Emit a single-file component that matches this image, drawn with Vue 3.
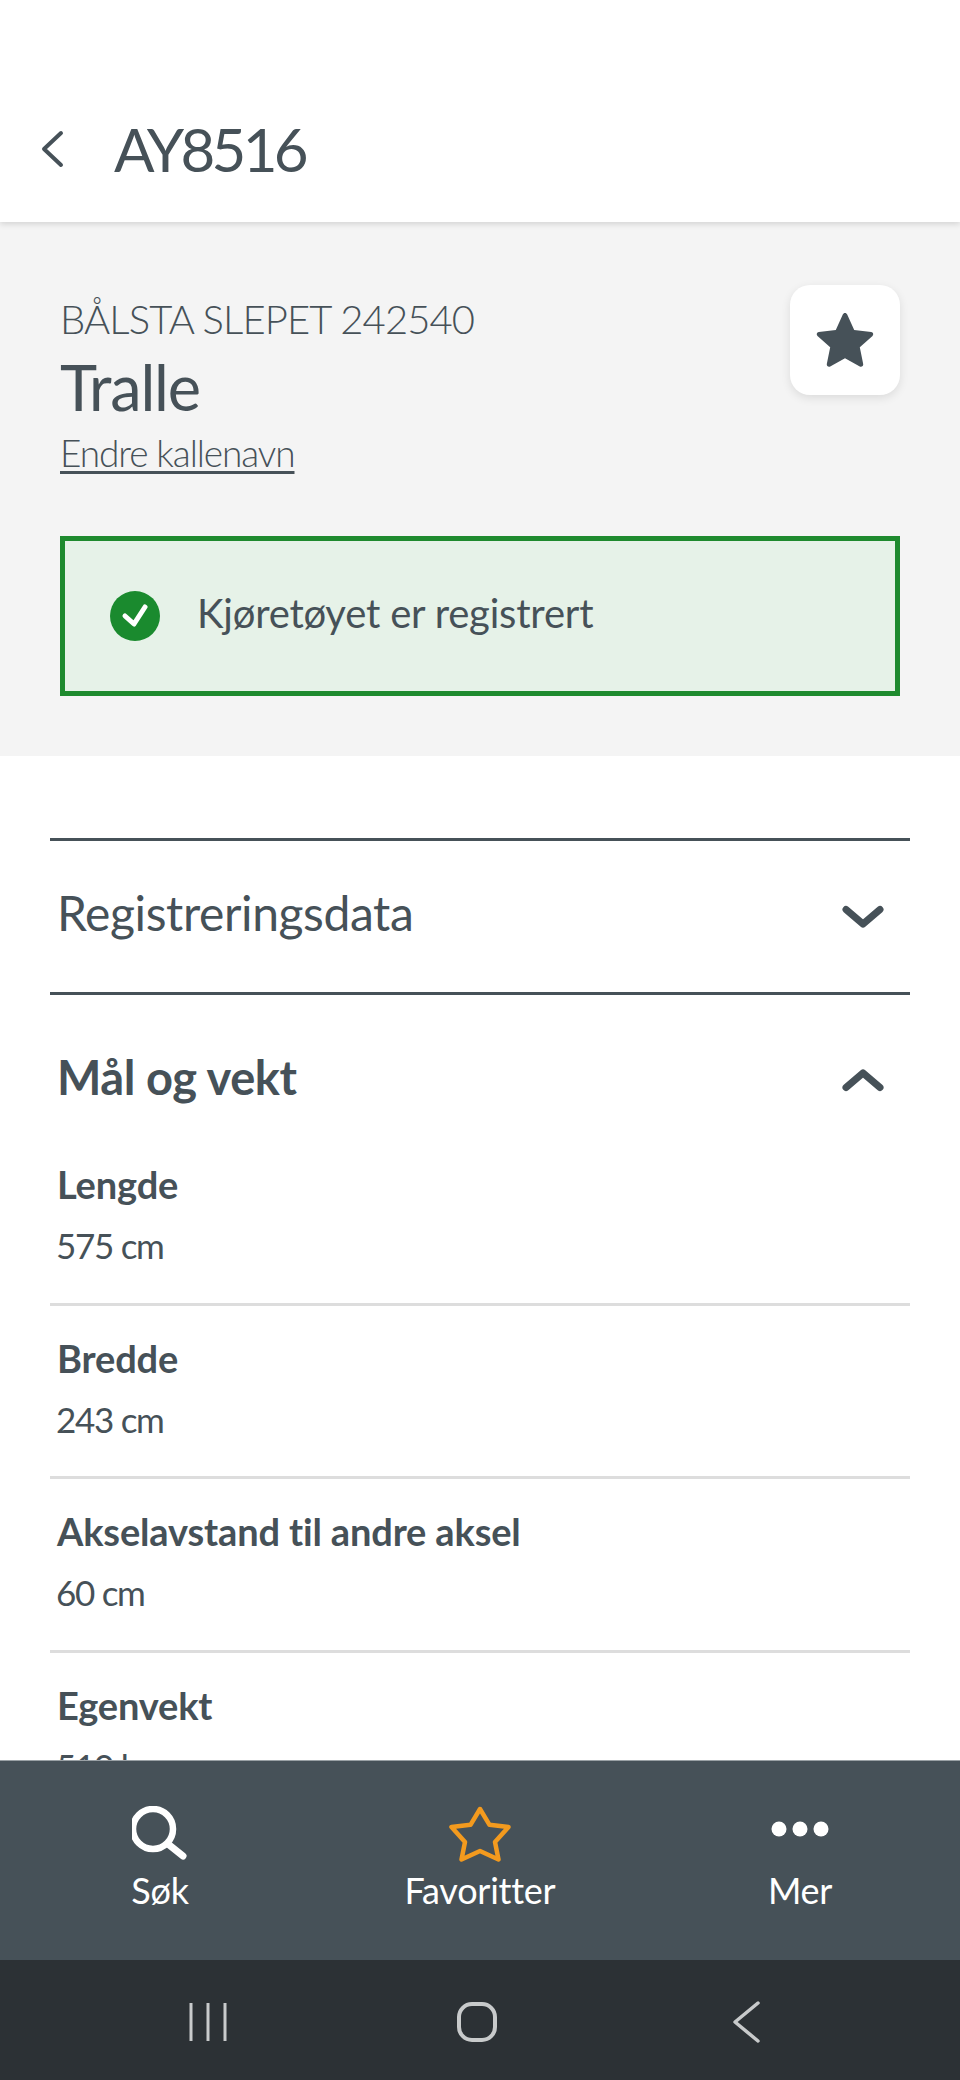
<script setup>
const rows = [
  { label: 'Lengde', value: '575 cm' },
  { label: 'Bredde', value: '243 cm' },
  { label: 'Akselavstand til andre aksel', value: '60 cm' },
  { label: 'Egenvekt', value: '510 kg' },
]
</script>

<template>
  <div class="phone">
    <header class="top">
      <svg class="back" width="24" height="40" viewBox="0 0 24 40"><path d="M21 4 4 20l17 16" fill="none" stroke="#465158" stroke-width="4" stroke-linecap="round" stroke-linejoin="round"/></svg>
      <h1 class="plate">AY8516</h1>
    </header>

    <main class="scroll">
      <section class="summary">
        <div class="head">
          <div class="names">
            <div class="owner">BÅLSTA SLEPET 242540</div>
            <div class="kind">Tralle</div>
            <a class="rename">Endre kallenavn</a>
          </div>
          <button class="fav">
            <svg width="60" height="56" viewBox="0 0 60 56"><path d="M30 1c1 0 1.800.6 2.200 1.500l7 15.500 17 2c2 .3 2.700 2.600 1.300 3.900L44.800 35.300l3.400 16.600c.4 2-1.700 3.400-3.400 2.500L30 46.200l-14.800 8.200c-1.700.9-3.800-.5-3.400-2.500l3.400-16.600L2.500 23.900c-1.400-1.300-.7-3.600 1.300-3.900l17-2 7-15.500C28.200 1.600 29 1 30 1z" fill="#465158"/></svg>
          </button>
        </div>
        <div class="alert">
          <svg width="50" height="50" viewBox="0 0 50 50"><circle cx="25" cy="25" r="25" fill="#1a8a2e"/><path d="m15 25 9 8 11-17" fill="none" stroke="#fff" stroke-width="5" stroke-linecap="round" stroke-linejoin="round"/></svg>
          <span class="alert-text">Kjøretøyet er registrert</span>
        </div>
      </section>

      <section class="details">
        <div class="acc closed">
          <span class="acc-title">Registreringsdata</span>
          <svg width="42" height="24" viewBox="0 0 42 24"><path d="M4 4.500 21 19 38 4.500" fill="none" stroke="#465158" stroke-width="7" stroke-linecap="round" stroke-linejoin="round"/></svg>
        </div>
        <div class="acc open">
          <span>Mål og vekt</span>
          <svg class="up" width="42" height="24" viewBox="0 0 42 24"><path d="M4 19.500 21 5l17 14.500" fill="none" stroke="#465158" stroke-width="7" stroke-linecap="round" stroke-linejoin="round"/></svg>
        </div>
        <dl class="rows">
          <div v-for="r in rows" :key="r.label" class="row">
            <dt>{{ r.label }}</dt>
            <dd>{{ r.value }}</dd>
          </div>
        </dl>
      </section>
    </main>

    <nav class="tabs">
      <div class="tab">
        <svg class="search" width="56" height="56" viewBox="0 0 56 56"><circle cx="21" cy="23" r="20" fill="none" stroke="#fff" stroke-width="6.500"/><path d="m36 38 15 12" stroke="#fff" stroke-width="7" stroke-linecap="round"/></svg>
        <span>Søk</span>
      </div>
      <div class="tab">
        <svg width="62" height="56" viewBox="0 0 62 56"><path d="M31 3l9.500 15.800L59.500 21 46 36l3.500 17.500L31 45l-18.500 8.500L16 36 2.500 21l19-2.200z" fill="none" stroke="#f39a1e" stroke-width="4.500" stroke-linejoin="round"/></svg>
        <span>Favoritter</span>
      </div>
      <div class="tab">
        <svg width="60" height="56" viewBox="0 0 60 56"><g fill="#fff"><circle cx="9" cy="23" r="7.500"/><circle cx="30" cy="23" r="7.500"/><circle cx="51" cy="23" r="7.500"/></g></svg>
        <span>Mer</span>
      </div>
    </nav>

    <footer class="sys">
      <svg width="40" height="40" viewBox="0 0 40 40"><path d="M3 1v38M20 1v38M37 1v38" stroke="#c8cacb" stroke-width="3"/></svg>
      <svg width="42" height="42" viewBox="0 0 42 42"><rect x="3" y="3" width="36" height="36" rx="13" fill="none" stroke="#c8cacb" stroke-width="4"/></svg>
      <svg width="30" height="42" viewBox="0 0 30 42"><path d="M27 2 4 21l23 19" fill="none" stroke="#c8cacb" stroke-width="3.500" stroke-linecap="round" stroke-linejoin="round"/></svg>
    </footer>
  </div>
</template>

<style>
html, body { margin: 0; background: #fff; }
</style>

<style scoped>
.phone {
  width: 960px;
  height: 2080px;
  display: flex;
  flex-direction: column;
  overflow: hidden;
  background: #fff;
  color: #465158;
  font-family: Lato, "Noto Sans", sans-serif;
}
.top {
  flex: none;
  height: 222px;
  box-sizing: border-box;
  padding: 76px 0 0 40px;
  display: flex;
  align-items: center;
  gap: 50px;
  background: #fff;
  box-shadow: 0 2px 6px rgba(0, 0, 0, .14);
  position: relative;
  z-index: 1;
}
.back { flex: none; }
.plate { margin: 0; font-size: 60px; font-weight: 400; letter-spacing: -3.7px; line-height: 72px; }
.scroll { flex: 1; min-height: 0; overflow: hidden; }
.summary {
  height: 534px;
  box-sizing: border-box;
  background: #f4f4f4;
  padding: 63px 60px 0 60px;
}
.head { display: flex; justify-content: space-between; align-items: flex-start; }
.owner { font-size: 40px; font-weight: 300; line-height: 48px; margin-top: 10px; letter-spacing: -.9px; }
.kind { font-size: 63px; line-height: 72px; margin-top: 8px; letter-spacing: -1.2px; }
.rename { display: block; font-size: 37px; font-weight: 300; line-height: 50px; margin-top: 5px; text-decoration: underline; text-underline-offset: 4px; letter-spacing: -1.1px; }
.fav {
  width: 110px;
  height: 110px;
  border: 0;
  padding: 0;
  border-radius: 20px;
  background: #fff;
  box-shadow: 0 3px 10px rgba(0, 0, 0, .1);
  display: flex;
  align-items: center;
  justify-content: center;
}
.alert {
  margin-top: 58px;
  width: 840px;
  height: 160px;
  box-sizing: border-box;
  border: 5px solid #1e8a2e;
  background: #e6f2e8;
  display: flex;
  align-items: center;
  gap: 37px;
  padding-left: 45px;
  font-size: 40px;
  letter-spacing: -.2px;
}
.alert svg { flex: none; }
.alert-text { margin-bottom: 6px; }
.details { margin: 82px 50px 0; }
.acc {
  display: flex;
  align-items: center;
  justify-content: space-between;
  padding: 0 26px 0 7px;
  box-sizing: border-box;
}
.acc.closed {
  height: 157px;
  border-top: 3px solid #465158;
  border-bottom: 3px solid #465158;
  font-size: 48px;
  letter-spacing: -.4px;
}
.acc-title { margin-bottom: 8px; }
.acc.open { height: 163px; font-size: 47px; font-weight: 700; letter-spacing: -.45px; }
.up { margin-top: 6px; }
.rows { margin: 0; margin-top: -26px; }
.row { height: 173.7px; box-sizing: border-box; border-bottom: 3px solid #ddd; padding: 0 6px 0 7px; }
.row dt { font-size: 38px; font-weight: 700; line-height: 46px; padding-top: 29px; letter-spacing: -.15px; }
.row dd { margin: 15px 0 0 -1px; font-size: 35px; line-height: 46px; letter-spacing: -1.3px; }
.tabs {
  flex: none;
  height: 200px;
  box-sizing: border-box;
  background: #465158;
  border-top: 1px solid #9aa1a5;
  display: grid;
  grid-template-columns: repeat(3, 320px);
  padding-top: 45px;
  position: relative;
}
.tab { display: flex; flex-direction: column; align-items: center; color: #fff; font-size: 36px; line-height: 44px; gap: 6px; letter-spacing: -.25px; }
.sys {
  flex: none;
  height: 120px;
  background: #2c3135;
  display: grid;
  grid-template-columns: repeat(3, 1fr);
  align-items: center;
  justify-items: center;
  padding: 4px 80px 0 74px;
  box-sizing: border-box;
}
</style>
